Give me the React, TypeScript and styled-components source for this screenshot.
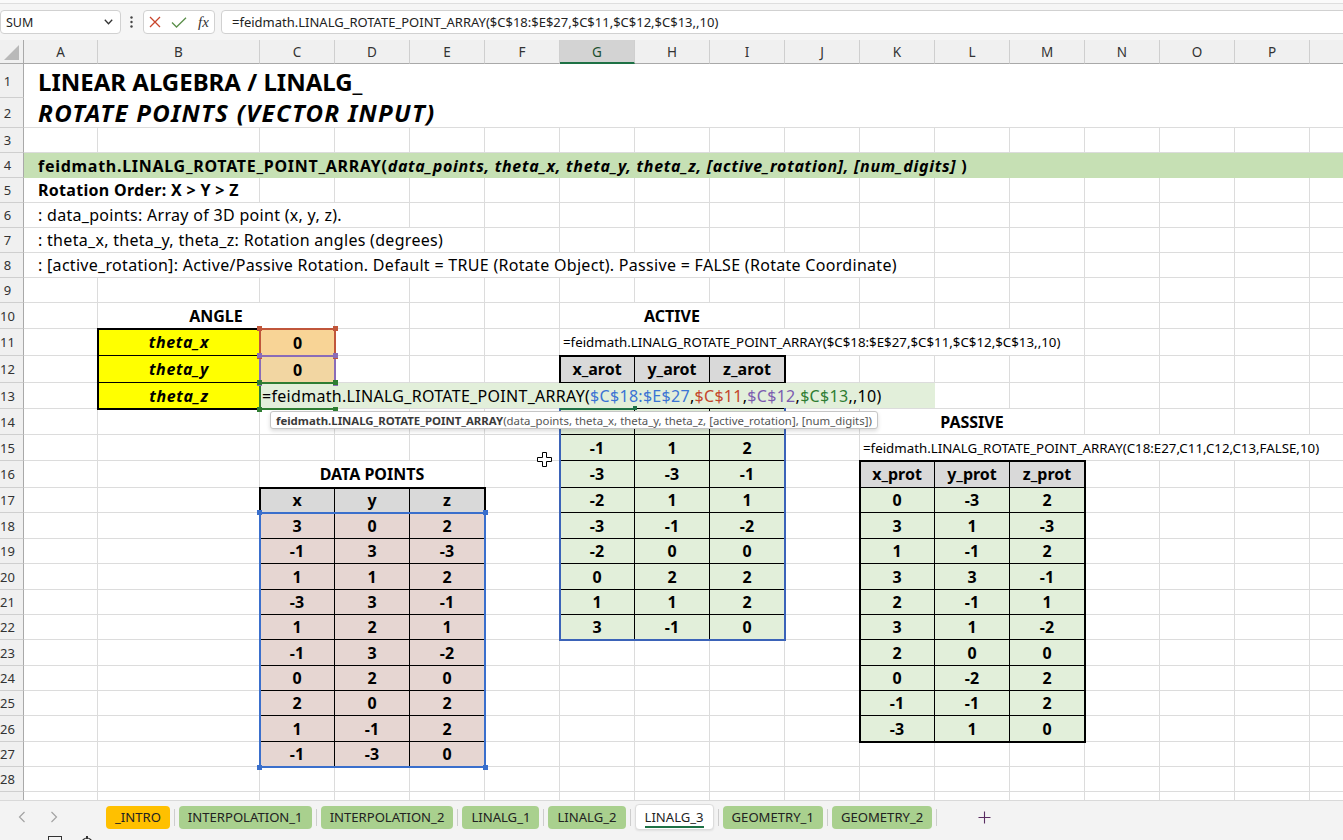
import React from "react";
import styled, { createGlobalStyle } from "styled-components";

const UI_FONT = `"Noto Sans", "Open Sans", "Liberation Sans", sans-serif`;
const CELL_FONT = `"Noto Sans", "Open Sans", "Liberation Sans", sans-serif`;
const GRID = "#dcdcdc";
const HEAD_BG = "#f0f0f0";
const HEAD_LINE = "#cfcfcf";
const HEAD_EDGE = "#a9a9a9";
const EXCEL_GREEN = "#1e7145";

const PINK = "#e6d6d2";
const LIGHT_GREEN = "#e2efda";
const HEAD_GRAY = "#d9d9d9";
const REF_BLUE = "#3a6fcc";
const SPILL_BLUE = "#3b63b8";
const REF_RED = "#c0563b";
const REF_PURPLE = "#8a6cb8";
const REF_GREEN = "#2e7d32";

const LETTERS = "ABCDEFGHIJKLMNOPQ".split("");
// row header, A, B, C..P, Q (Q only peeks in at the right edge)
const COL_W = [24, 74, 162, ...Array(14).fill(75), 110];
const ROW_H = [34, 30, 25, 25, 25, 25, 25, 25, 25, 26, 27, 27, 26, 26, 26, 27, 25, 26, 25, 26, 25, 25, 26, 25, 25, 26, 25, 25, 25];
const COL_TEMPLATE = COL_W.map((w) => `${w}px`).join(" ");
const ROW_TEMPLATE = ["24px", ...ROW_H.map((h) => `${h}px`)].join(" ");

const cellPos = (ref: string) => {
  const m = /^([A-Q])(\d+)$/.exec(ref)!;
  return { c: LETTERS.indexOf(m[1]) + 1, r: Number(m[2]) };
};
const area = (range: string) => {
  const [a, b = a] = range.split(":");
  const p = cellPos(a);
  const q = cellPos(b);
  return `${p.r + 1} / ${p.c + 1} / ${q.r + 2} / ${q.c + 2}`;
};
const rowsFor = (range: string) => {
  const [a, b = a] = range.split(":");
  return ROW_H.slice(cellPos(a).r - 1, cellPos(b).r)
    .map((h) => `${h}px`)
    .join(" ");
};

const DATA = [
  [3, 0, 2],
  [-1, 3, -3],
  [1, 1, 2],
  [-3, 3, -1],
  [1, 2, 1],
  [-1, 3, -2],
  [0, 2, 0],
  [2, 0, 2],
  [1, -1, 2],
  [-1, -3, 0],
];
// theta_z = 90: active rotates the points, passive rotates the axes
const ACTIVE = DATA.map(([x, y, z]) => [-y, x, z]);
const PASSIVE = DATA.map(([x, y, z]) => [y, -x, z]);
// the first two spilled rows sit under the in-cell editor and its tooltip
const ACTIVE_SHOWN: (number | null)[][] = ACTIVE.map((r, i) => (i < 2 ? [null, null, null] : r));

const GlobalStyle = createGlobalStyle`
  html, body { margin: 0; padding: 0; width: 1343px; height: 840px; overflow: hidden; background: #fff; }
  body { font-family: ${UI_FONT}; color: #000; }
  #root { width: 1343px; height: 840px; }
  * { box-sizing: border-box; }
`;

/* ---------- window chrome ---------- */
const Window = styled.div`
  width: 1343px;
  height: 840px;
  display: flex;
  flex-direction: column;
  overflow: hidden;
  background: #fff;
`;
const TopStrip = styled.div`
  flex: none;
  height: 4px;
  background: #fafafa;
  border-bottom: 1px solid #dedede;
`;
const FormulaBar = styled.div`
  flex: none;
  height: 36px;
  display: flex;
  align-items: center;
  background: #f5f5f5;
`;
const NameBox = styled.div`
  width: 121px;
  height: 24px;
  border: 1px solid #d1d1d1;
  border-radius: 4px;
  background: #fff;
  display: flex;
  align-items: center;
  justify-content: space-between;
  padding: 0 7px 0 5px;
  font-size: 12.5px;
  color: #222;
`;
const Kebab = styled.svg`
  margin: 0 10px 0 9px;
  flex: none;
`;
const FxGroup = styled.div`
  width: 72px;
  height: 24px;
  border: 1px solid #d1d1d1;
  border-radius: 4px;
  background: #fff;
  display: flex;
  align-items: center;
  padding-left: 5px;
  gap: 10px;
`;
const FxLabel = styled.span`
  font-family: "Liberation Serif", "DejaVu Serif", serif;
  font-style: italic;
  font-size: 15px;
  color: #333;
  margin-left: 1px;
`;
const FormulaInput = styled.div`
  flex: 1;
  height: 24px;
  margin-left: 6px;
  margin-right: -20px;
  border: 1px solid #d1d1d1;
  border-radius: 4px;
  background: #fff;
  display: flex;
  align-items: center;
  padding-left: 10px;
  font-size: 13px;
  color: #222;
  white-space: nowrap;
`;

/* ---------- sheet ---------- */
const SheetFrame = styled.div`
  flex: none;
  height: 760px;
  display: grid;
  grid-template-columns: 1343px;
  grid-template-rows: 760px;
  overflow: hidden;
`;
const BaseLayer = styled.div`
  grid-area: 1 / 1;
  display: flex;
  flex-direction: column;
`;
const HeaderRow = styled.div`
  display: grid;
  grid-template-columns: ${COL_TEMPLATE};
  height: 24px;
  flex: none;
  background: ${HEAD_BG};
`;
const Corner = styled.div`
  border-right: 1px solid ${HEAD_EDGE};
  border-bottom: 1px solid ${HEAD_EDGE};
  display: flex;
  align-items: flex-end;
  justify-content: flex-end;
  padding: 0 3px 3px 0;
`;
const ColHeader = styled.div<{ $selected?: boolean }>`
  border-right: 1px solid ${HEAD_LINE};
  border-bottom: ${(p) => (p.$selected ? `2px solid ${EXCEL_GREEN}` : `1px solid ${HEAD_EDGE}`)};
  background: ${(p) => (p.$selected ? "#d3d3d3" : HEAD_BG)};
  color: ${(p) => (p.$selected ? "#1d4f2f" : "#333")};
  display: flex;
  align-items: center;
  justify-content: center;
  font-size: 13.5px;
  padding-top: ${(p) => (p.$selected ? "1px" : "0")};
`;
const SheetRow = styled.div<{ $h: number }>`
  display: grid;
  grid-template-columns: ${COL_TEMPLATE};
  height: ${(p) => p.$h}px;
  flex: none;
`;
const RowHeader = styled.div`
  background: ${HEAD_BG};
  border-right: 1px solid ${HEAD_EDGE};
  border-bottom: 1px solid ${HEAD_LINE};
  display: flex;
  align-items: center;
  justify-content: center;
  padding-right: 8px;
  font-size: 13px;
  color: #333;
  overflow: visible;
  white-space: nowrap;
`;
const GridCell = styled.div`
  border-right: 1px solid ${GRID};
  border-bottom: 1px solid ${GRID};
`;
const ContentLayer = styled.div`
  grid-area: 1 / 1;
  display: grid;
  grid-template-columns: ${COL_TEMPLATE};
  grid-template-rows: ${ROW_TEMPLATE};
  font-family: ${CELL_FONT};
  font-size: 16px;
  color: #000;
`;

/* ---------- cell content ---------- */
const Title = styled.div<{ $area: string; $italic?: boolean; $line?: boolean }>`
  grid-area: ${(p) => p.$area};
  background: #fff;
  border-bottom: ${(p) => (p.$line ? `1px solid ${GRID}` : "none")};
  display: flex;
  align-items: center;
  padding-left: 14px;
  font-size: 24px;
  font-weight: 700;
  font-style: ${(p) => (p.$italic ? "italic" : "normal")};
  letter-spacing: ${(p) => (p.$italic ? "1.3px" : "0")};
  white-space: nowrap;
`;
const FunctionBand = styled.div<{ $area: string }>`
  grid-area: ${(p) => p.$area};
  background: #c6e0b4;
  display: flex;
  align-items: center;
  padding-left: 14px;
  font-weight: 700;
  letter-spacing: 0.72px;
  white-space: nowrap;
  em {
    font-style: italic;
  }
`;
const NoteLine = styled.div<{ $area: string; $bold?: boolean }>`
  grid-area: ${(p) => p.$area};
  background: #fff;
  border-right: 1px solid ${GRID};
  border-bottom: 1px solid ${GRID};
  display: flex;
  align-items: center;
  padding-left: 14px;
  font-weight: ${(p) => (p.$bold ? 700 : 400)};
  letter-spacing: 0.3px;
  white-space: nowrap;
`;
const SectionHeading = styled.div<{ $area: string }>`
  grid-area: ${(p) => p.$area};
  background: #fff;
  border-right: 1px solid ${GRID};
  border-bottom: 1px solid ${GRID};
  display: flex;
  align-items: center;
  justify-content: center;
  font-weight: 700;
  white-space: nowrap;
`;
const FormulaNote = styled.div<{ $area: string }>`
  grid-area: ${(p) => p.$area};
  background: #fff;
  border-right: 1px solid ${GRID};
  border-bottom: 1px solid ${GRID};
  display: flex;
  align-items: center;
  padding-left: 3px;
  font-size: 13.3px;
  white-space: nowrap;
  overflow: hidden;
`;

/* ---------- tables ---------- */
const TableGrid = styled.div<{ $area: string; $rows: string; $frame: string }>`
  grid-area: ${(p) => p.$area};
  position: relative;
  display: grid;
  grid-template-columns: repeat(3, minmax(0, 1fr));
  grid-template-rows: ${(p) => p.$rows};
  &::after {
    content: "";
    position: absolute;
    inset: -1px;
    border: 2px solid ${(p) => p.$frame};
    pointer-events: none;
  }
`;
const TableCell = styled.div<{ $fill: string }>`
  background: ${(p) => p.$fill};
  border-right: 1px solid #000;
  border-bottom: 1px solid #000;
  display: flex;
  align-items: center;
  justify-content: center;
  font-weight: 700;
`;
const AngleGrid = styled.div<{ $area: string; $rows: string }>`
  grid-area: ${(p) => p.$area};
  position: relative;
  display: grid;
  grid-template-rows: ${(p) => p.$rows};
  &::after {
    content: "";
    position: absolute;
    inset: -1px;
    border: 2px solid #000;
    pointer-events: none;
  }
`;
const AngleLabel = styled.div`
  background: #ffff00;
  border-bottom: 1px solid #000;
  display: flex;
  align-items: center;
  justify-content: center;
  font-weight: 700;
  font-style: italic;
  letter-spacing: 0.6px;
`;
const RefCell = styled.div<{ $area: string; $fill: string; $color: string }>`
  grid-area: ${(p) => p.$area};
  position: relative;
  background: ${(p) => p.$fill};
  display: flex;
  align-items: center;
  justify-content: center;
  font-weight: 700;
  &::after {
    content: "";
    position: absolute;
    inset: -1px;
    border: 2px solid ${(p) => p.$color};
    pointer-events: none;
  }
`;
const RangeFrame = styled.div<{ $area: string; $color: string; $openRight?: boolean }>`
  grid-area: ${(p) => p.$area};
  position: relative;
  pointer-events: none;
  &::after {
    content: "";
    position: absolute;
    inset: -1px;
    border: 2px solid ${(p) => p.$color};
    border-right-width: ${(p) => (p.$openRight ? 0 : 2)}px;
  }
`;
const Handle = styled.span<{ $color: string; $v: "top" | "bottom"; $h: "left" | "right" }>`
  position: absolute;
  width: 5px;
  height: 5px;
  background: ${(p) => p.$color};
  ${(p) => p.$v}: -3px;
  ${(p) => p.$h}: -3px;
  z-index: 1;
`;
const EditCell = styled.div<{ $area: string }>`
  grid-area: ${(p) => p.$area};
  position: relative;
  margin-bottom: 1px;
  background: ${LIGHT_GREEN};
  display: flex;
  align-items: center;
  padding-left: 2px;
  font-size: 16px;
  letter-spacing: 0.3px;
  white-space: nowrap;
`;
const RefText = styled.span<{ $color: string }>`
  color: ${(p) => p.$color};
`;
const GreenTick = styled.div<{ $area: string }>`
  grid-area: ${(p) => p.$area};
  position: relative;
  align-self: start;
  height: 2px;
  margin-top: -1px;
  margin-right: -2px;
  background: ${EXCEL_GREEN};
  &::after {
    content: "";
    position: absolute;
    right: 0;
    top: -2px;
    width: 4px;
    height: 4px;
    background: ${EXCEL_GREEN};
  }
`;
const Anchor = styled.div<{ $area: string }>`
  grid-area: ${(p) => p.$area};
  position: relative;
`;
const Tooltip = styled.div`
  position: absolute;
  left: 10px;
  top: 2px;
  height: 18px;
  display: flex;
  align-items: center;
  padding: 0 5px;
  background: #fff;
  border: 1px solid #c6c6c6;
  border-radius: 3px;
  box-shadow: 0 2px 4px rgba(0, 0, 0, 0.15);
  font-family: ${UI_FONT};
  font-size: 11.4px;
  color: #555;
  white-space: nowrap;
  z-index: 3;
  b {
    color: #3a3a3a;
    font-weight: 700;
  }
`;
const PointerGlyph = styled.svg`
  position: absolute;
  left: 52px;
  top: 17px;
  z-index: 3;
`;

/* ---------- tabs / status ---------- */
const TabBar = styled.div`
  flex: none;
  height: 33px;
  display: flex;
  align-items: center;
  background: #f3f3f3;
  border-top: 1px solid #d9d9d9;
  padding-left: 6px;
  font-family: ${UI_FONT};
`;
const NavButton = styled.div`
  width: 32px;
  display: flex;
  justify-content: center;
  align-items: center;
`;
const TabStrip = styled.div`
  display: flex;
  align-items: center;
  margin-left: 36px;
`;
const Tab = styled.div<{ $color: string; $active?: boolean }>`
  height: ${(p) => (p.$active ? "26px" : "23px")};
  padding: 0 9px;
  display: flex;
  align-items: center;
  border-radius: 4px;
  background: ${(p) => p.$color};
  border: ${(p) => (p.$active ? "1px solid #dcdcdc" : "none")};
  box-shadow: ${(p) => (p.$active ? "0 1px 2px rgba(0,0,0,0.08)" : "none")};
  font-size: 13.1px;
  color: #222;
  white-space: nowrap;
`;
const ActiveTabLabel = styled.span`
  border-bottom: 2px solid ${EXCEL_GREEN};
  line-height: 17px;
  padding-top: 2px;
  color: #1f1f1f;
`;
const TabSep = styled.div`
  width: 1px;
  height: 17px;
  margin: 0 4px;
  background: #cdcdcd;
`;
const AddTab = styled.div`
  margin-left: 33px;
  width: 20px;
  display: flex;
  justify-content: center;
`;
const StatusBar = styled.div`
  flex: none;
  height: 7px;
  background: #f3f3f3;
  display: flex;
  align-items: flex-start;
  gap: 18px;
  padding: 3px 0 0 48px;
  overflow: hidden;
`;

const Handles = ({ color }: { color: string }) => (
  <>
    <Handle $color={color} $v="top" $h="left" />
    <Handle $color={color} $v="top" $h="right" />
    <Handle $color={color} $v="bottom" $h="left" />
    <Handle $color={color} $v="bottom" $h="right" />
  </>
);

function NumberTable({
  range,
  head,
  rows,
  fill,
  frame,
}: {
  range: string;
  head?: string[];
  rows?: (number | null)[][];
  fill: string;
  frame: string;
}) {
  return (
    <TableGrid $area={area(range)} $rows={rowsFor(range)} $frame={frame}>
      {head?.map((h) => (
        <TableCell key={h} $fill={HEAD_GRAY}>
          {h}
        </TableCell>
      ))}
      {rows?.map((row, i) =>
        row.map((v, j) => (
          <TableCell key={`${i}-${j}`} $fill={fill}>
            {v === null ? "" : String(v)}
          </TableCell>
        ))
      )}
    </TableGrid>
  );
}

const TABS = [
  { name: "_INTRO", color: "#ffc000" },
  { name: "INTERPOLATION_1", color: "#a9d08e" },
  { name: "INTERPOLATION_2", color: "#a9d08e" },
  { name: "LINALG_1", color: "#a9d08e" },
  { name: "LINALG_2", color: "#a9d08e" },
  { name: "LINALG_3", color: "#ffffff", active: true },
  { name: "GEOMETRY_1", color: "#a9d08e" },
  { name: "GEOMETRY_2", color: "#a9d08e" },
];

function Sheet() {
  return (
    <SheetFrame>
      <BaseLayer>
        <HeaderRow>
          <Corner>
            <svg width="16" height="16" viewBox="0 0 16 16">
              <polygon points="15,1 15,16 0,16" fill="#b9b9b9" />
            </svg>
          </Corner>
          {LETTERS.map((l) => (
            <ColHeader key={l} $selected={l === "G"}>
              {l === "Q" ? "" : l}
            </ColHeader>
          ))}
        </HeaderRow>
        {ROW_H.map((h, i) => (
          <SheetRow key={i} $h={h}>
            <RowHeader>{i + 1}</RowHeader>
            {LETTERS.map((l) => (
              <GridCell key={l} />
            ))}
          </SheetRow>
        ))}
      </BaseLayer>

      <ContentLayer>
        <Title $area={area("A1:Q1")}>LINEAR ALGEBRA / LINALG_</Title>
        <Title $area={area("A2:Q2")} $italic $line>
          ROTATE POINTS (VECTOR INPUT)
        </Title>
        <FunctionBand $area={area("A4:Q4")}>
          feidmath.LINALG_ROTATE_POINT_ARRAY(
          <em>data_points, theta_x, theta_y, theta_z, [active_rotation], [num_digits]</em>
          &nbsp;)
        </FunctionBand>
        <NoteLine $area={area("A5:B5")} $bold>
          Rotation Order: X &gt; Y &gt; Z
        </NoteLine>
        <NoteLine $area={area("A6:D6")}>: data_points: Array of 3D point (x, y, z).</NoteLine>
        <NoteLine $area={area("A7:E7")}>: theta_x, theta_y, theta_z: Rotation angles (degrees)</NoteLine>
        <NoteLine $area={area("A8:K8")}>
          : [active_rotation]: Active/Passive Rotation. Default = TRUE (Rotate Object). Passive = FALSE (Rotate
          Coordinate)
        </NoteLine>

        <SectionHeading $area={area("B10:C10")}>ANGLE</SectionHeading>
        <SectionHeading $area={area("G10:I10")}>ACTIVE</SectionHeading>
        <FormulaNote $area={area("G11:M11")}>
          =feidmath.LINALG_ROTATE_POINT_ARRAY($C$18:$E$27,$C$11,$C$12,$C$13,,10)
        </FormulaNote>
        <SectionHeading $area={area("K14:M14")}>PASSIVE</SectionHeading>
        <FormulaNote $area={area("K15:Q15")}>
          =feidmath.LINALG_ROTATE_POINT_ARRAY(C18:E27,C11,C12,C13,FALSE,10)
        </FormulaNote>
        <SectionHeading $area={area("C16:E16")}>DATA POINTS</SectionHeading>

        <AngleGrid $area={area("B11:B13")} $rows={rowsFor("B11:B13")}>
          <AngleLabel>theta_x</AngleLabel>
          <AngleLabel>theta_y</AngleLabel>
          <AngleLabel>theta_z</AngleLabel>
        </AngleGrid>
        <RefCell $area={area("C11")} $fill="#f8d496" $color={REF_RED}>
          0
          <Handles color={REF_RED} />
        </RefCell>
        <RefCell $area={area("C12")} $fill="#f2d6a2" $color={REF_PURPLE}>
          0
          <Handles color={REF_PURPLE} />
        </RefCell>

        <NumberTable range="C17:E27" head={["x", "y", "z"]} rows={DATA} fill={PINK} frame="#000" />
        <RangeFrame $area={area("C18:E27")} $color={REF_BLUE}>
          <Handles color={REF_BLUE} />
        </RangeFrame>

        <NumberTable range="G13:I22" rows={ACTIVE_SHOWN} fill={LIGHT_GREEN} frame={SPILL_BLUE} />
        <NumberTable range="G12:I12" head={["x_arot", "y_arot", "z_arot"]} fill={HEAD_GRAY} frame="#000" />
        <NumberTable
          range="K16:M26"
          head={["x_prot", "y_prot", "z_prot"]}
          rows={PASSIVE}
          fill={LIGHT_GREEN}
          frame="#000"
        />

        <EditCell $area={area("C13:K13")}>
          =feidmath.LINALG_ROTATE_POINT_ARRAY(<RefText $color="#3b74d4">$C$18:$E$27</RefText>,
          <RefText $color="#c4462c">$C$11</RefText>,<RefText $color="#7b5cb0">$C$12</RefText>,
          <RefText $color="#2e7d32">$C$13</RefText>,,10)
        </EditCell>
        <RangeFrame $area={area("C13")} $color={REF_GREEN} $openRight>
          <Handles color={REF_GREEN} />
        </RangeFrame>
        <GreenTick $area={area("G14")} />

        <Anchor $area={area("C14")}>
          <Tooltip>
            <b>feidmath.LINALG_ROTATE_POINT_ARRAY</b>(data_points, theta_x, theta_y, theta_z, [active_rotation],
            [num_digits])
          </Tooltip>
        </Anchor>
        <Anchor $area={area("F15")}>
          <PointerGlyph width="15" height="15" viewBox="0 0 15 15">
            <polygon
              points="5.5,0.5 9.5,0.5 9.5,5.5 14.5,5.5 14.5,9.5 9.5,9.5 9.5,14.5 5.5,14.5 5.5,9.5 0.5,9.5 0.5,5.5 5.5,5.5"
              fill="#fff"
              stroke="#000"
              strokeWidth="1"
            />
          </PointerGlyph>
        </Anchor>
      </ContentLayer>
    </SheetFrame>
  );
}

export default function App() {
  return (
    <>
      <GlobalStyle />
      <Window>
        <TopStrip />
        <FormulaBar>
          <NameBox>
            <span>SUM</span>
            <svg width="9" height="6" viewBox="0 0 9 6">
              <polyline points="0.8,0.8 4.5,4.8 8.2,0.8" fill="none" stroke="#333" strokeWidth="1.3" />
            </svg>
          </NameBox>
          <Kebab width="3" height="12" viewBox="0 0 3 12">
            <circle cx="1.5" cy="1.5" r="1.2" fill="#444" />
            <circle cx="1.5" cy="6" r="1.2" fill="#444" />
            <circle cx="1.5" cy="10.5" r="1.2" fill="#444" />
          </Kebab>
          <FxGroup>
            <svg width="12" height="12" viewBox="0 0 12 12">
              <path d="M1 1 L11 11 M11 1 L1 11" stroke="#c8452c" strokeWidth="1.3" fill="none" />
            </svg>
            <svg width="16" height="11" viewBox="0 0 16 11">
              <polyline points="1,5.5 5.5,10 15,0.8" stroke="#5b8f4a" strokeWidth="1.3" fill="none" />
            </svg>
            <FxLabel>fx</FxLabel>
          </FxGroup>
          <FormulaInput>=feidmath.LINALG_ROTATE_POINT_ARRAY($C$18:$E$27,$C$11,$C$12,$C$13,,10)</FormulaInput>
        </FormulaBar>

        <Sheet />

        <TabBar>
          <NavButton>
            <svg width="8" height="12" viewBox="0 0 8 12">
              <polyline points="6.5,1 1.5,6 6.5,11" fill="none" stroke="#a3a3a3" strokeWidth="1.2" />
            </svg>
          </NavButton>
          <NavButton>
            <svg width="8" height="12" viewBox="0 0 8 12">
              <polyline points="1.5,1 6.5,6 1.5,11" fill="none" stroke="#a3a3a3" strokeWidth="1.2" />
            </svg>
          </NavButton>
          <TabStrip>
            {TABS.map((t, i) => (
              <React.Fragment key={t.name}>
                {i > 0 && <TabSep />}
                <Tab $color={t.color} $active={t.active}>
                  {t.active ? <ActiveTabLabel>{t.name}</ActiveTabLabel> : t.name}
                </Tab>
              </React.Fragment>
            ))}
            <TabSep />
          </TabStrip>
          <AddTab>
            <svg width="13" height="13" viewBox="0 0 13 13">
              <path d="M6.5 0.5 V12.5 M0.5 6.5 H12.5" stroke="#5a2d62" strokeWidth="1.1" />
            </svg>
          </AddTab>
        </TabBar>
        <StatusBar>
          <svg width="14" height="12" viewBox="0 0 14 12">
            <rect x="0.5" y="0.5" width="13" height="11" fill="none" stroke="#333" strokeWidth="1" />
          </svg>
          <svg width="14" height="14" viewBox="0 0 14 14">
            <circle cx="7" cy="7" r="5" fill="none" stroke="#333" strokeWidth="1.2" />
            <rect x="6" y="0" width="2" height="3" fill="#333" />
          </svg>
        </StatusBar>
      </Window>
    </>
  );
}
